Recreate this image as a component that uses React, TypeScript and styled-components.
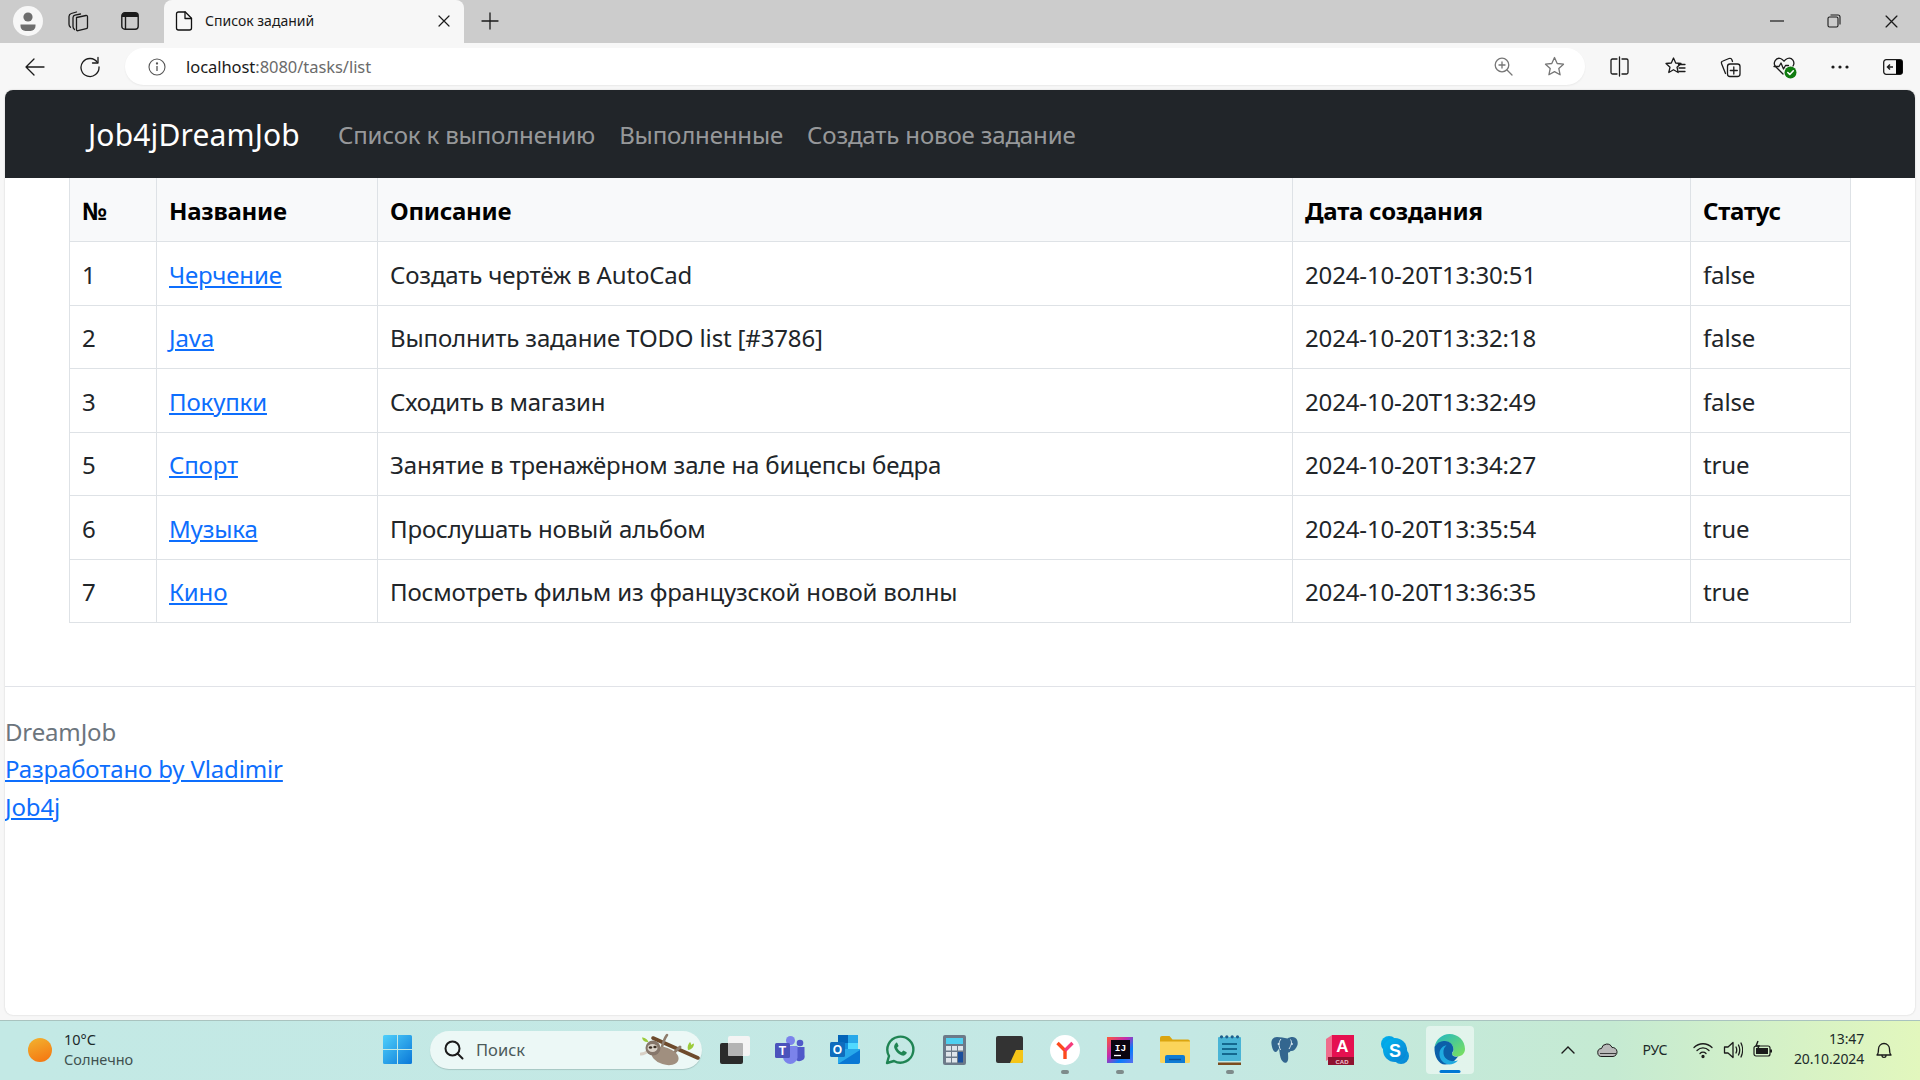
import styled, {createGlobalStyle} from "styled-components";
import {ReactNode} from "react";

const FONT = `"Noto Sans", "Open Sans", "Liberation Sans", sans-serif`;

const GlobalStyle = createGlobalStyle`
  html, body {
    margin: 0;
    padding: 0;
    background: #f7f7f7;
    overflow: hidden;
  }
  * {
    box-sizing: border-box;
  }
`;

const Screen = styled.div`
  width: 1920px;
  height: 1080px;
  display: flex;
  flex-direction: column;
  background: #f7f7f7;
  font-family: ${FONT};
  overflow: hidden;
`;

const TabStrip = styled.div`
  height: 43px;
  display: flex;
  align-items: stretch;
  background: #cccccc;
`;

const Slot = styled.div<{$w: number}>`
  width: ${(p) => p.$w}px;
  flex: none;
  display: flex;
  align-items: center;
  justify-content: center;
`;

const StripSlot = styled(Slot)`
  padding-bottom: 1px;
`;

const StarSlot = styled(Slot)`
  margin-left: 16px;
`;

const Tab = styled.div`
  width: 300px;
  margin-left: 4px;
  flex: none;
  display: flex;
  align-items: center;
  padding: 0 14px 2px 10px;
  background: #f7f7f7;
  border-radius: 8px 8px 0 0;
`;

const TabTitle = styled.span`
  margin-left: 11px;
  flex: 1;
  font-size: 14px;
  letter-spacing: 0;
  color: #1a1a1a;
`;

const Spacer = styled.div`
  flex: 1;
`;

const Toolbar = styled.div`
  height: 47px;
  display: flex;
  align-items: center;
  padding-left: 7px;
  background: #f7f7f7;
`;

const AddressBar = styled.div`
  width: 1460px;
  height: 37px;
  margin: 0 7px 0 8px;
  flex: none;
  display: flex;
  align-items: center;
  padding: 0 6px 0 23px;
  background: #ffffff;
  border-radius: 19px;
  box-shadow: 0 1px 2px rgba(0, 0, 0, 0.06);
`;

const Url = styled.span`
  margin-left: 20px;
  flex: 1;
  font-size: 16.5px;
  letter-spacing: -0.05px;
  color: #1a1a1a;
`;

const UrlRest = styled.span`
  color: #6b6b6b;
`;

const Page = styled.main`
  height: 925px;
  margin: 0 5px;
  flex: none;
  background: #ffffff;
  border-radius: 8px;
  box-shadow: 0 0 2px rgba(0, 0, 0, 0.18);
  overflow: hidden;
  font-size: 24px;
  line-height: 37.5px;
  letter-spacing: -0.15px;
  color: #212529;
`;

const Navbar = styled.nav`
  height: 88px;
  display: flex;
  align-items: center;
  padding: 2px 0 0 83px;
  background: #212529;
`;

const Brand = styled.a`
  margin-right: 26px;
  font-size: 30px;
  letter-spacing: 0.15px;
  color: #ffffff;
`;

const NavLink = styled.a`
  padding: 0 12px;
  letter-spacing: -0.15px;
  color: rgba(255, 255, 255, 0.55);
`;

const TableWrap = styled.section`
  padding: 0 64px;
`;

const Table = styled.table`
  width: 100%;
  border-collapse: collapse;
  table-layout: fixed;
`;

const Th = styled.th<{$w?: number}>`
  width: ${(p) => (p.$w ? `${p.$w}px` : "auto")};
  height: 63.5px;
  padding: 2px 12px 0;
  text-align: left;
  font-weight: 700;
  letter-spacing: -0.25px;
  color: #000000;
  background: #f8f9fa;
  border: 1px solid #dee2e6;
  border-top: none;
`;

const Td = styled.td`
  height: 63.5px;
  padding: 2px 12px 0;
  border: 1px solid #dee2e6;
`;

const TextLink = styled.a`
  color: #0d6efd;
  text-decoration: underline;
`;

const Divider = styled.hr`
  height: 1px;
  margin: 63px 0 25.5px;
  border: none;
  background: #e1e3e8;
`;

const Footer = styled.footer`
  display: flex;
  flex-direction: column;
  align-items: flex-start;
`;

const FooterTitle = styled.span`
  color: #6c757d;
`;

const Taskbar = styled.div`
  height: 60px;
  margin-top: 5px;
  padding-bottom: 2px;
  flex: none;
  display: flex;
  align-items: center;
  background: linear-gradient(90deg, #c3e9e5 0%, #c4e8e4 62%, #c5ead2 84%, #e2f7bd 100%);
  border-top: 1px solid #a9c3bf;
  color: #1c2a2a;
`;

const Weather = styled.div`
  width: 383px;
  flex: none;
  display: flex;
  align-items: center;
  padding-left: 28px;
`;

const Sun = styled.div`
  width: 24px;
  height: 24px;
  border-radius: 50%;
  background: linear-gradient(160deg, #f2b430, #f5720f);
`;

const WeatherText = styled.div`
  margin: -2px 0 0 12px;
  display: flex;
  flex-direction: column;
  font-size: 14.5px;
  line-height: 20px;
  letter-spacing: 0;
`;

const Muted = styled.span`
  color: #3f5150;
`;

const SearchBox = styled.div`
  width: 272px;
  height: 38px;
  margin: 0 5px 0 18px;
  flex: none;
  display: flex;
  align-items: center;
  padding-left: 14px;
  background: #ecf8f6;
  border-radius: 19px;
  box-shadow: 0 1px 1px rgba(0, 0, 0, 0.15);
  font-size: 16.5px;
  color: #4b5a5a;
`;

const SearchLabel = styled.span`
  margin-left: 12px;
  flex: 1;
`;

const AppSlot = styled.div`
  width: 55px;
  flex: none;
  display: flex;
  justify-content: center;
`;

const AppTile = styled.div<{$active?: boolean}>`
  position: relative;
  width: 48px;
  height: 48px;
  display: flex;
  align-items: center;
  justify-content: center;
  border-radius: 4px;
  background: ${(p) => (p.$active ? "rgba(255, 255, 255, 0.5)" : "transparent")};
`;

const Indicator = styled.div<{$active?: boolean}>`
  position: absolute;
  bottom: ${(p) => (p.$active ? "1px" : "0")};
  left: 50%;
  width: ${(p) => (p.$active ? "21px" : "8px")};
  height: ${(p) => (p.$active ? "3px" : "4px")};
  transform: translateX(-50%);
  border-radius: 2px;
  background: ${(p) => (p.$active ? "#0078d4" : "#7e8b8b")};
`;

const Tray = styled.div`
  flex: 1;
  display: flex;
  align-items: center;
  justify-content: flex-end;
  padding-right: 27px;
`;

const TrayChevron = styled.div`
  display: flex;
  margin-right: 19px;
`;

const Lang = styled.span`
  width: 66px;
  text-align: center;
  font-size: 14px;
  letter-spacing: -0.2px;
`;

const Clock = styled.div`
  margin: -2px 11px 0 16px;
  display: flex;
  flex-direction: column;
  align-items: flex-end;
  font-size: 14px;
  line-height: 20px;
  letter-spacing: -0.15px;
`;

type IconProps = {children: ReactNode; size?: number; box?: number; color?: string};

const Ico = ({children, size = 20, box = 20, color = "#1b1b1b"}: IconProps) => (
  <svg width={size} height={size} viewBox={`0 0 ${box} ${box}`} fill="none" stroke={color} strokeWidth="1.3" strokeLinecap="round" strokeLinejoin="round">
    {children}
  </svg>
);

const ProfileIcon = () => (
  <svg width="30" height="30" viewBox="0 0 30 30">
    <circle cx="15" cy="15" r="15" fill="#f7f7f7" />
    <circle cx="15" cy="11" r="4.6" fill="#6e6e6e" />
    <path d="M7.5 18.500h15v1.500a5 5 0 0 1-5 5h-5a5 5 0 0 1-5-5z" fill="#6e6e6e" />
  </svg>
);

const TabsIcon = () => (
  <Ico size={22} box={22}>
    <path d="M9.500 7.500 19 5.500c1-.2 1.500.3 1.500 1.300v10.400c0 .8-.4 1.300-1.200 1.500l-8.300 2c-1 .2-1.500-.3-1.500-1.300z" />
    <path d="M13.500 4 8 5.200C6.500 5.500 6 6.300 6 7.800v8.700c0 1.300.5 2.200 1.500 3" />
    <path d="M9.500 2 4.300 3.500C2.800 4 2 5 2 6.500v7.800c0 1.200.5 2.200 1.500 3" />
  </Ico>
);

const VerticalTabsIcon = () => (
  <svg width="18" height="18" viewBox="0 0 18 18" fill="none" stroke="#1b1b1b" strokeWidth="1.400">
    <rect x=".8" y=".8" width="16.400" height="16.400" rx="3" />
    <path d="M1 3.500A2.500 2.500 0 0 1 3.500 1h11A2.500 2.500 0 0 1 17 3.500V5H1z" fill="#1b1b1b" stroke="none" />
    <path d="M4.500 5v12" />
  </svg>
);

const PageIcon = () => (
  <Ico size={20} box={20} color="#111">
    <path d="M2.500 3C2.500 1.800 3.300 1 4.500 1h6.800l6.200 6.200V17c0 1.200-.8 2-2 2h-11c-1.200 0-2-.8-2-2z" />
    <path d="M11 1v6.500h6.500" />
  </Ico>
);

const CloseIcon = ({size = 12}: {size?: number}) => (
  <svg width={size} height={size} viewBox="0 0 12 12" stroke="#1b1b1b" strokeWidth="1.2" strokeLinecap="round">
    <path d="M1 1l10 10M11 1 1 11" />
  </svg>
);

const PlusIcon = () => (
  <svg width="18" height="18" viewBox="0 0 18 18" stroke="#1b1b1b" strokeWidth="1.300" strokeLinecap="round">
    <path d="M9 1v16M1 9h16" />
  </svg>
);

const MinimizeIcon = () => (
  <svg width="14" height="2" viewBox="0 0 14 2" stroke="#1b1b1b" strokeWidth="1.200">
    <path d="M0 1h14" />
  </svg>
);

const RestoreIcon = () => (
  <svg width="14" height="14" viewBox="0 0 14 14" fill="none" stroke="#1b1b1b" strokeWidth="1.100">
    <rect x="1" y="3" width="10" height="10" rx="1.500" />
    <path d="M3.500 1H11a2 2 0 0 1 2 2v7.500" />
  </svg>
);

const BackIcon = () => (
  <Ico size={22} box={22}>
    <path d="M20 11H2M10 3l-8 8 8 8" />
  </Ico>
);

const ReloadIcon = () => (
  <Ico size={22} box={22}>
    <path d="M18.500 6.500A9 9 0 1 0 20 11" />
    <path d="M19 1.500V7h-5.500" />
  </Ico>
);

const InfoIcon = () => (
  <svg width="18" height="18" viewBox="0 0 18 18" fill="none" stroke="#555" strokeWidth="1.100">
    <circle cx="9" cy="9" r="8" />
    <path d="M9 8v5" strokeWidth="1.300" />
    <circle cx="9" cy="5.500" r=".6" fill="#555" />
  </svg>
);

const ZoomIcon = () => (
  <Ico size={19} box={19} color="#777">
    <circle cx="8" cy="8" r="6.800" />
    <path d="M8 5v6M5 8h6M13 13l5 5" />
  </Ico>
);

const StarIcon = ({color = "#777"}: {color?: string}) => (
  <Ico size={21} box={21} color={color}>
    <path d="M10.500 1.500l2.700 6 6.300.7-4.700 4.300 1.300 6.300-5.600-3.200-5.600 3.200 1.300-6.300L1.500 8.200l6.300-.7z" />
  </Ico>
);

const SplitIcon = () => (
  <Ico size={21} box={21}>
    <path d="M8 3H3.500C2.500 3 2 3.500 2 4.500v12c0 1 .5 1.500 1.500 1.500H8M13 3h4.500c1 0 1.500.5 1.500 1.500v12c0 1-.5 1.500-1.500 1.500H13M10.500 1v19" />
  </Ico>
);

const FavoritesIcon = () => (
  <Ico size={22} box={22}>
    <path d="M9.500 2l2.200 5 5.300.5-4 3.700 1.200 5.300-4.700-2.800-4.700 2.800L6 11.200 2 7.500 7.300 7z" />
    <path d="M14.500 8.500H21M15 12h6M15 15.500h6" />
  </Ico>
);

const CollectionsIcon = () => (
  <Ico size={22} box={22}>
    <path d="M6.500 17.500 2.700 8C2 6.500 2.500 5.500 4 5L10 2.500c1.500-.5 2.500 0 3 1.500l.5 1.500" />
    <rect x="8.500" y="8" width="12.500" height="12.500" rx="2.500" />
    <path d="M14.800 11v7M11.300 14.500h7" />
  </Ico>
);

const HealthIcon = () => (
  <svg width="24" height="24" viewBox="0 0 24 24" fill="none" stroke="#1b1b1b" strokeWidth="1.300" strokeLinejoin="round" strokeLinecap="round">
    <path d="M10 19 2.500 11.500C-.5 8 3 2 7.500 3.500c1.500.5 2.500 1.500 3.500 2.700 1-1.200 2-2.200 3.500-2.700C19 2 22.500 7 20 11" />
    <path d="M1 11.500h5l2-3.500 2.500 6 2-3.500h3" />
    <circle cx="17.500" cy="17.500" r="6" fill="#107c10" stroke="none" />
    <path d="M14.800 17.500l2 2 3.500-3.700" stroke="#fff" strokeWidth="1.600" />
  </svg>
);

const DotsIcon = () => (
  <svg width="18" height="4" viewBox="0 0 18 4" fill="#1b1b1b">
    <circle cx="2" cy="2" r="1.600" />
    <circle cx="9" cy="2" r="1.600" />
    <circle cx="16" cy="2" r="1.600" />
  </svg>
);

const SidebarIcon = () => (
  <svg width="20" height="16" viewBox="0 0 20 16" fill="none" stroke="#1b1b1b" strokeWidth="1.300">
    <rect x=".7" y=".7" width="18.600" height="14.600" rx="2.500" />
    <path d="M13 1h4.500C19 1 19.500 2 19.500 3v10c0 1-.5 2-2 2H13z" fill="#000" stroke="none" />
    <path d="M10 8H4.500M7 5.500 4.500 8 7 10.500" strokeWidth="1.500" />
  </svg>
);

const SearchIcon = () => (
  <Ico size={20} box={20} color="#1a1a1a">
    <g strokeWidth="2">
      <circle cx="8.500" cy="8.500" r="7" />
      <path d="M13.500 13.500 18.500 18.500" />
    </g>
  </Ico>
);

const SlothIcon = () => (
  <svg width="62" height="40" viewBox="0 0 62 40">
    <path d="M2 7.500c2 0 5 1 6.500 4.500-3 .5-6-1-6.500-4.500zM48 20c-1-3 0-6 2-8 1 1 1 2 1 3 1-1 2-1.500 3-1.500 0 3-2 6-6 6.500z" fill="#9ccb3c" />
    <path d="M13 8 58 28" stroke="#6d4a2c" strokeWidth="3.600" strokeLinecap="round" />
    <path d="M22 17c1-4 2-8 5-12" stroke="#8e7d6d" strokeWidth="2.600" strokeLinecap="round" fill="none" />
    <path d="M32 24c3-2 6-5 8-7" stroke="#8e7d6d" strokeWidth="3" strokeLinecap="round" fill="none" />
    <ellipse cx="25" cy="26" rx="14" ry="8.500" fill="#a08f7f" transform="rotate(18 25 26)" />
    <path d="M9 20c-2 2-5 4-8 4" stroke="#d8d0c5" strokeWidth="3" strokeLinecap="round" fill="none" />
    <circle cx="13" cy="18" r="7.500" fill="#86766a" />
    <ellipse cx="12.500" cy="18" rx="5" ry="4" fill="#d9d1c7" />
    <ellipse cx="10.500" cy="17.500" rx="1.700" ry="1.300" fill="#3a2d22" />
    <ellipse cx="15" cy="17" rx="1.700" ry="1.300" fill="#3a2d22" />
  </svg>
);

const WindowsLogo = () => (
  <svg width="29" height="29" viewBox="0 0 29 29">
    <defs>
      <linearGradient id="winA" x1="0" y1="0" x2="1" y2="1">
        <stop offset="0" stopColor="#4fd0fb" />
        <stop offset="1" stopColor="#0a78d8" />
      </linearGradient>
    </defs>
    <path d="M0 1.500A1.500 1.500 0 0 1 1.500 0H14v14H0zM15 0h12.500A1.500 1.500 0 0 1 29 1.500V14H15zM0 15h14v14H1.500A1.500 1.500 0 0 1 0 27.500zM15 15h14v12.500a1.500 1.500 0 0 1-1.500 1.500H15z" fill="url(#winA)" />
  </svg>
);

const TaskViewIcon = () => (
  <svg width="30" height="28" viewBox="0 0 30 28">
    <rect x="0" y="7" width="23" height="21" rx="2" fill="#2b2b2b" />
    <rect x="8" y="0" width="22" height="20" rx="2" fill="#f4f4f4" />
    <rect x="8" y="7" width="15" height="13" rx="1" fill="#b4b4b4" />
  </svg>
);

const TeamsIcon = () => (
  <svg width="30" height="30" viewBox="0 0 30 30">
    <circle cx="25" cy="8" r="3.300" fill="#5059c9" />
    <circle cx="15.500" cy="5.500" r="4.500" fill="#7b83eb" />
    <path d="M20 12h9.500v8a5 5 0 0 1-9.500 3z" fill="#5059c9" />
    <path d="M8 11h14.500v11.500a7.300 7.300 0 0 1-14.500 0z" fill="#7b83eb" />
    <rect x="0" y="8" width="15" height="15" rx="1.500" fill="#4b53bc" />
    <text x="7.500" y="20" textAnchor="middle" fontFamily="Liberation Sans" fontWeight="700" fontSize="12" fill="#ffffff">T</text>
  </svg>
);

const OutlookIcon = () => (
  <svg width="30" height="30" viewBox="0 0 30 30">
    <rect x="8" y="0" width="20" height="16" fill="#1490df" />
    <rect x="18" y="0" width="10" height="8" fill="#28a8ea" />
    <rect x="8" y="0" width="10" height="8" fill="#0364b8" />
    <rect x="18" y="8" width="10" height="8" fill="#50d9ff" />
    <path d="M8 14h22v12a3 3 0 0 1-3 3H8z" fill="#28a8ea" />
    <path d="M8 29 30 15v12a2 2 0 0 1-2 2z" fill="#0a78d4" />
    <rect x="0" y="7" width="15" height="15" rx="1.500" fill="#0f6cbd" />
    <text x="7.500" y="19" textAnchor="middle" fontFamily="Liberation Sans" fontWeight="700" fontSize="12" fill="#ffffff">O</text>
  </svg>
);

const WhatsAppIcon = () => (
  <svg width="30" height="30" viewBox="0 0 30 30">
    <path d="M2 28l2-7A13 13 0 1 1 9 26z" fill="none" stroke="#1f8453" strokeWidth="2.400" strokeLinejoin="round" />
    <path d="M10.500 8.500c-1.500 1.500-2 3.500-.5 6 1.500 3 4 5 7 6 2 .5 3.500-.5 4.500-2 .3-.7.300-1.300-.2-1.600l-3-1.500-1.700 1.800c-2-1-3.500-2.500-4.500-4.500l1.500-1.700-1.300-3c-.3-.8-1.300-.9-1.800.5z" fill="#1f8453" />
  </svg>
);

const CalculatorIcon = () => (
  <svg width="23" height="30" viewBox="0 0 23 30">
    <rect width="23" height="30" rx="2" fill="#6c7a89" />
    <rect x="3" y="3" width="17" height="6" fill="#4fd0f0" />
    <g fill="#dfe5ea">
      <rect x="3" y="11" width="5" height="4.500" />
      <rect x="9" y="11" width="5" height="4.500" />
      <rect x="3" y="17" width="5" height="4.500" />
      <rect x="9" y="17" width="5" height="4.500" />
      <rect x="3" y="23" width="5" height="4.500" />
      <rect x="9" y="23" width="5" height="4.500" />
      <rect x="15" y="11" width="5" height="4.500" />
    </g>
    <rect x="15" y="17" width="5" height="10.500" fill="#1a4f9c" />
  </svg>
);

const StickyIcon = () => (
  <svg width="27" height="27" viewBox="0 0 27 27">
    <rect width="27" height="27" rx="2" fill="#333333" />
    <path d="M14 27l6-13h7v11a2 2 0 0 1-2 2z" fill="#f5c518" />
  </svg>
);

const YandexIcon = () => (
  <svg width="30" height="30" viewBox="0 0 30 30">
    <circle cx="15" cy="15" r="15" fill="#ffffff" />
    <path d="M7.500 8 15 15.500V24" fill="none" stroke="#fc4a1d" strokeWidth="3.400" />
    <path d="M22.500 8 15 15.500" fill="none" stroke="#f53c7c" strokeWidth="3.400" />
  </svg>
);

const IdeaIcon = () => (
  <svg width="26" height="26" viewBox="0 0 26 26">
    <defs>
      <linearGradient id="ideaA" x1="0" y1="0" x2="1" y2="1">
        <stop offset="0" stopColor="#fe5a37" />
        <stop offset=".4" stopColor="#c22bb0" />
        <stop offset=".7" stopColor="#087cfa" />
        <stop offset="1" stopColor="#5a6ef0" />
      </linearGradient>
    </defs>
    <rect width="26" height="26" fill="url(#ideaA)" />
    <rect x="4" y="3" width="19" height="19" fill="#0a0410" />
    <text x="13.500" y="13.500" textAnchor="middle" fontFamily="Liberation Mono" fontWeight="700" fontSize="9.500" fill="#ffffff">IJ</text>
    <path d="M7 18.500h7" stroke="#ffffff" strokeWidth="1.300" />
  </svg>
);

const FolderIcon = () => (
  <svg width="30" height="27" viewBox="0 0 30 27">
    <path d="M0 2a2 2 0 0 1 2-2h7.500l3 3.500H28a2 2 0 0 1 2 2V9H0z" fill="#dba50f" />
    <path d="M0 5.500h30V25.500a1.500 1.500 0 0 1-1.500 1.500h-27A1.500 1.500 0 0 1 0 25.500z" fill="#fbd45a" />
    <path d="M5 27v-6a2 2 0 0 1 2-2h16a2 2 0 0 1 2 2v6z" fill="#0f7bd4" />
    <path d="M9 23.500h12" stroke="#0b4f95" strokeWidth="1.400" />
  </svg>
);

const NotepadIcon = () => (
  <svg width="23" height="30" viewBox="0 0 23 30">
    <rect x="0" y="2" width="23" height="24" rx="1" fill="#49b4d6" />
    <rect x="0" y="27.500" width="23" height="2.500" fill="#7b4b1e" />
    <g fill="#1e5f8c">
      <circle cx="3.500" cy="1.800" r="1.600" />
      <circle cx="8.800" cy="1.800" r="1.600" />
      <circle cx="14.200" cy="1.800" r="1.600" />
      <circle cx="19.500" cy="1.800" r="1.600" />
    </g>
    <path d="M4 9h15M4 14h15M4 19h15" stroke="#14688f" strokeWidth="2" />
  </svg>
);

const PostgresIcon = () => (
  <svg width="28" height="28" viewBox="0 0 28 28">
    <path d="M6 1C2 1 0 4 .5 8c.5 4 2 8 4 8 1.500 0 2.500-2 3.500-3.500.5 2 .5 5 1.500 9 1 4 4 6 6 5 2.500-1.500 1.500-6 1.500-10 1 0 2-.5 2.500-1.500 3 .5 5.500-2 7-6 1-4-1-8-5-8-2 0-3.500.5-5 1.500C13 1.500 9.500 1 6 1z" fill="#33668f" />
    <path d="M10 3c-2.500 3-2.500 7-.5 11M19.500 3.500c2 3 .5 6-1.500 9.500" stroke="#dcebf0" strokeWidth="1" fill="none" />
    <circle cx="7.500" cy="8" r=".9" fill="#dcebf0" />
    <circle cx="21" cy="8" r=".9" fill="#dcebf0" />
  </svg>
);

const AutocadIcon = () => (
  <svg width="28" height="30" viewBox="0 0 28 30">
    <path d="M0 4 6 0v22l-6 4z" fill="#ef6d8c" />
    <path d="M6 0h22v22H6z" fill="#e51050" />
    <path d="M2 22h26v8H2z" fill="#8f1230" />
    <text x="16.500" y="17" textAnchor="middle" fontFamily="Liberation Sans" fontWeight="700" fontSize="17" fill="#ffffff">A</text>
    <text x="16" y="28.500" textAnchor="middle" fontFamily="Liberation Sans" fontWeight="700" fontSize="6" fill="#f3c7d2">CAD</text>
  </svg>
);

const SkypeIcon = () => (
  <svg width="28" height="28" viewBox="0 0 28 28">
    <defs>
      <linearGradient id="skypeA" x1="0" y1="0" x2="1" y2="1">
        <stop offset="0" stopColor="#00b7f0" />
        <stop offset="1" stopColor="#0a7fd0" />
      </linearGradient>
    </defs>
    <circle cx="8" cy="8" r="8" fill="url(#skypeA)" />
    <circle cx="20" cy="20" r="8" fill="url(#skypeA)" />
    <circle cx="14" cy="14" r="12" fill="url(#skypeA)" />
    <text x="14" y="20.500" textAnchor="middle" fontFamily="Liberation Sans" fontWeight="700" fontSize="18" fill="#ffffff">S</text>
  </svg>
);

const EdgeIcon = () => (
  <svg width="31" height="31" viewBox="0 0 31 31">
    <defs>
      <linearGradient id="edgeA" x1="0" y1="0" x2="1" y2="1">
        <stop offset="0" stopColor="#1fb6c6" />
        <stop offset="1" stopColor="#7fe25a" />
      </linearGradient>
    </defs>
    <path d="M15.500 0C24 0 31 6.500 31 15c0 5-4 7.500-8 7.500-3 0-5-1-5-2.500 0-1 1.500-1.500 1.500-4.500C19.500 11 16 7.500 11 7.500 6 7.500 2 10.500 .5 13 2 5.500 8 0 15.500 0z" fill="url(#edgeA)" />
    <path d="M.5 13C3 8.500 7 7 11 7c5 0 8.500 4 8.500 8.500 0 2-1.500 2.500-1.500 4.500 0 2 3 3 6 2.500-1 1-5 8-13 8C5 30.500 0 23 .5 13z" fill="#0c5fa8" />
    <path d="M15 30.500C9 30 5 25 5.500 19 6 14 9.500 11.500 12.500 11.500c-2 1.500-3.500 4-3 8 .5 5 6 9.500 14.500 7-2.500 2.500-5.500 4-9 4z" fill="#1fa9e0" />
  </svg>
);

const WifiIcon = () => (
  <Ico size={20} box={20}>
    <path d="M1 7.500c5-5 13-5 18 0M4 10.500c3.500-3.500 8.500-3.500 12 0M7 13.500c1.700-1.700 4.300-1.700 6 0" />
    <circle cx="10" cy="16.500" r="1" fill="#1b1b1b" />
  </Ico>
);

const SpeakerIcon = () => (
  <Ico size={20} box={20}>
    <path d="M1.500 7H5l5-4.500v15L5 13H1.500z" />
    <path d="M13 7c1 2 1 4 0 6M15.500 5c1.500 3 1.500 7 0 10M18 3c2 4 2 10 0 14" />
  </Ico>
);

const BatteryIcon = () => (
  <svg width="20" height="20" viewBox="0 0 20 20" fill="none" stroke="#1b1b1b" strokeWidth="1.200">
    <rect x="1" y="6" width="16" height="10" rx="2" />
    <rect x="3" y="8" width="12" height="6" fill="#1b1b1b" stroke="none" />
    <path d="M18 9.500v3" strokeWidth="2" />
    <path d="M5 1 3 6h3L4.500 9.500" stroke="#1b1b1b" strokeWidth="1.400" />
  </svg>
);

const CloudIcon = () => (
  <svg width="21" height="14" viewBox="0 0 21 14">
    <path d="M5 13.500a4 4 0 0 1-.5-8A5.500 5.500 0 0 1 15 4.500a4.500 4.500 0 0 1 1 9z" fill="#b9b9b9" stroke="#1b1b1b" strokeWidth="1" />
    <path d="M3 10.500h16" stroke="#1b1b1b" strokeWidth=".8" />
  </svg>
);

const ChevronIcon = () => (
  <svg width="14" height="8" viewBox="0 0 14 8" fill="none" stroke="#1b1b1b" strokeWidth="1.400" strokeLinecap="round">
    <path d="M1 7l6-6 6 6" />
  </svg>
);

const BellIcon = () => (
  <Ico size={18} box={18}>
    <path d="M2 14c1.500-1.500 1.500-3 1.500-6a5.500 5.500 0 0 1 11 0c0 3 0 4.500 1.500 6z" />
    <path d="M7 14.500c0 2.500 4 2.500 4 0" />
  </Ico>
);

type Task = {id: number; title: string; description: string; created: string; done: boolean};

const TASKS: Task[] = [
  {id: 1, title: "Черчение", description: "Создать чертёж в AutoCad", created: "2024-10-20T13:30:51", done: false},
  {id: 2, title: "Java", description: "Выполнить задание TODO list [#3786]", created: "2024-10-20T13:32:18", done: false},
  {id: 3, title: "Покупки", description: "Сходить в магазин", created: "2024-10-20T13:32:49", done: false},
  {id: 5, title: "Спорт", description: "Занятие в тренажёрном зале на бицепсы бедра", created: "2024-10-20T13:34:27", done: true},
  {id: 6, title: "Музыка", description: "Прослушать новый альбом", created: "2024-10-20T13:35:54", done: true},
  {id: 7, title: "Кино", description: "Посмотреть фильм из французской новой волны", created: "2024-10-20T13:36:35", done: true},
];

const APPS: {key: string; icon: ReactNode; on?: boolean; active?: boolean}[] = [
  {key: "taskview", icon: <TaskViewIcon />},
  {key: "teams", icon: <TeamsIcon />},
  {key: "outlook", icon: <OutlookIcon />},
  {key: "whatsapp", icon: <WhatsAppIcon />},
  {key: "calc", icon: <CalculatorIcon />},
  {key: "sticky", icon: <StickyIcon />},
  {key: "yandex", icon: <YandexIcon />, on: true},
  {key: "idea", icon: <IdeaIcon />, on: true},
  {key: "folder", icon: <FolderIcon />},
  {key: "notepad", icon: <NotepadIcon />, on: true},
  {key: "postgres", icon: <PostgresIcon />},
  {key: "autocad", icon: <AutocadIcon />},
  {key: "skype", icon: <SkypeIcon />},
  {key: "edge", icon: <EdgeIcon />, active: true},
];

export default function App() {
  return (
    <Screen>
      <GlobalStyle />
      <TabStrip>
        <StripSlot $w={55}><ProfileIcon /></StripSlot>
        <StripSlot $w={45}><TabsIcon /></StripSlot>
        <StripSlot $w={60}><VerticalTabsIcon /></StripSlot>
        <Tab>
          <PageIcon />
          <TabTitle>Список заданий</TabTitle>
          <CloseIcon />
        </Tab>
        <StripSlot $w={52}><PlusIcon /></StripSlot>
        <Spacer />
        <StripSlot $w={57}><MinimizeIcon /></StripSlot>
        <StripSlot $w={58}><RestoreIcon /></StripSlot>
        <StripSlot $w={57}><CloseIcon size={13} /></StripSlot>
      </TabStrip>
      <Toolbar>
        <Slot $w={55}><BackIcon /></Slot>
        <Slot $w={55}><ReloadIcon /></Slot>
        <AddressBar>
          <InfoIcon />
          <Url>localhost<UrlRest>:8080/tasks/list</UrlRest></Url>
          <ZoomIcon />
          <StarSlot $w={50}><StarIcon /></StarSlot>
        </AddressBar>
        <Slot $w={55}><SplitIcon /></Slot>
        <Slot $w={55}><FavoritesIcon /></Slot>
        <Slot $w={55}><CollectionsIcon /></Slot>
        <Slot $w={55}><HealthIcon /></Slot>
        <Slot $w={55}><DotsIcon /></Slot>
        <Slot $w={52}><SidebarIcon /></Slot>
      </Toolbar>
      <Page>
        <Navbar>
          <Brand>Job4jDreamJob</Brand>
          <NavLink>Список к выполнению</NavLink>
          <NavLink>Выполненные</NavLink>
          <NavLink>Создать новое задание</NavLink>
        </Navbar>
        <TableWrap>
          <Table>
            <thead>
              <tr>
                <Th $w={87}>№</Th>
                <Th $w={221}>Название</Th>
                <Th $w={915}>Описание</Th>
                <Th $w={398}>Дата создания</Th>
                <Th>Статус</Th>
              </tr>
            </thead>
            <tbody>
              {TASKS.map((task) => (
                <tr key={task.id}>
                  <Td>{task.id}</Td>
                  <Td><TextLink>{task.title}</TextLink></Td>
                  <Td>{task.description}</Td>
                  <Td>{task.created}</Td>
                  <Td>{String(task.done)}</Td>
                </tr>
              ))}
            </tbody>
          </Table>
        </TableWrap>
        <Divider />
        <Footer>
          <FooterTitle>DreamJob</FooterTitle>
          <TextLink>Разработано by Vladimir</TextLink>
          <TextLink>Job4j</TextLink>
        </Footer>
      </Page>
      <Taskbar>
        <Weather>
          <Sun />
          <WeatherText>
            <span>10°C</span>
            <Muted>Солнечно</Muted>
          </WeatherText>
        </Weather>
        <Slot $w={29}><WindowsLogo /></Slot>
        <SearchBox>
          <SearchIcon />
          <SearchLabel>Поиск</SearchLabel>
          <SlothIcon />
        </SearchBox>
        {APPS.map((app) => (
          <AppSlot key={app.key}>
            <AppTile $active={app.active}>
              {app.icon}
              {(app.on || app.active) && <Indicator $active={app.active} />}
            </AppTile>
          </AppSlot>
        ))}
        <Tray>
          <TrayChevron><ChevronIcon /></TrayChevron>
          <Slot $w={28}><CloudIcon /></Slot>
          <Lang>РУС</Lang>
          <Slot $w={30}><WifiIcon /></Slot>
          <Slot $w={30}><SpeakerIcon /></Slot>
          <Slot $w={30}><BatteryIcon /></Slot>
          <Clock>
            <span>13:47</span>
            <span>20.10.2024</span>
          </Clock>
          <BellIcon />
        </Tray>
      </Taskbar>
    </Screen>
  );
}
